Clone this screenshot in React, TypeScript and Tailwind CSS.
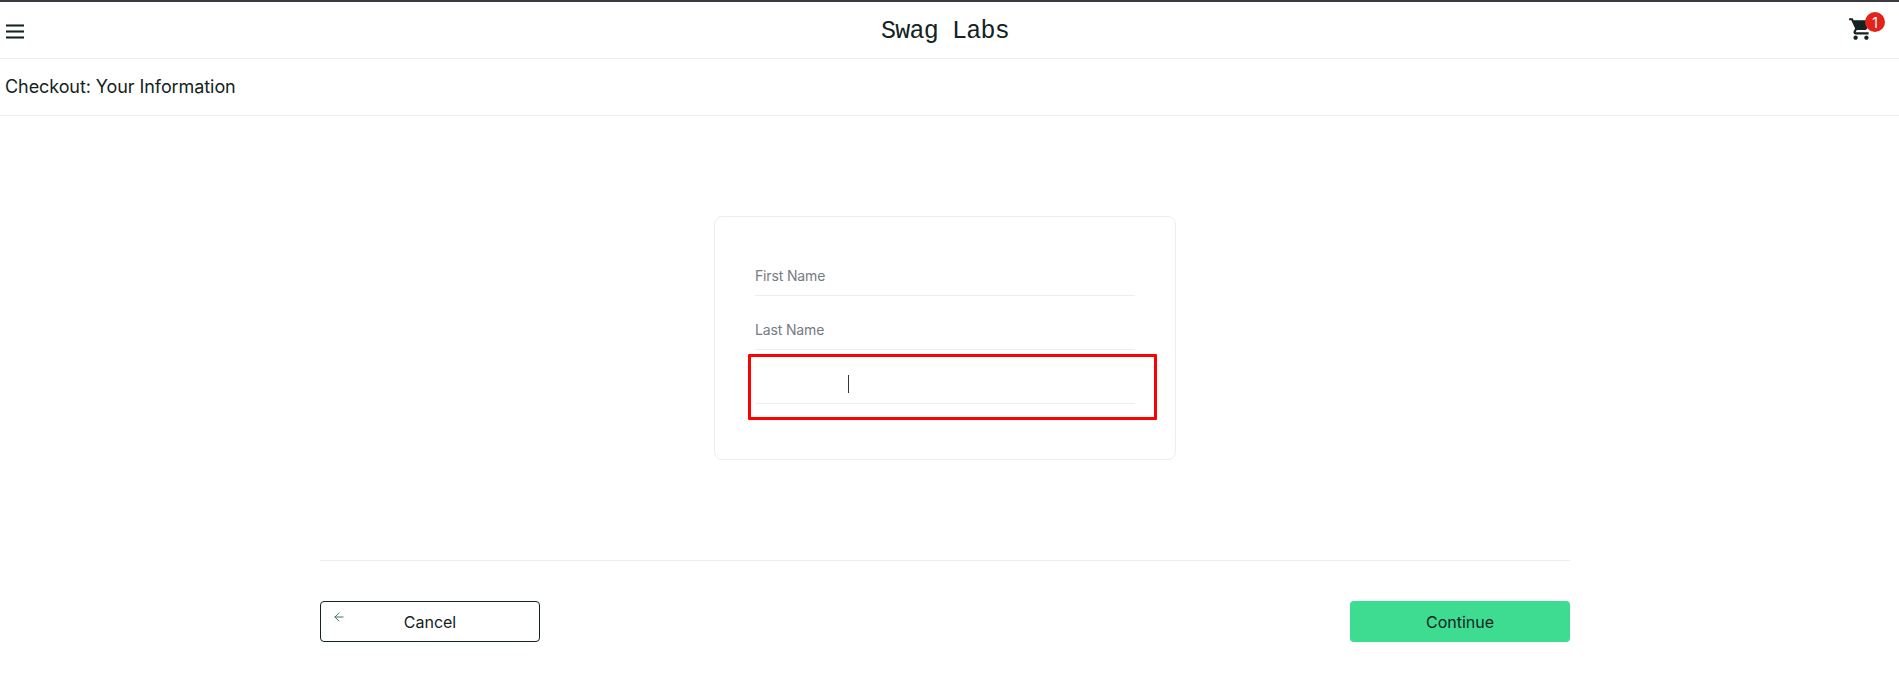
import { ArrowLeft } from "lucide-react";
import { MdShoppingCart } from "react-icons/md";

function Header() {
  return (
    <header className="grid h-[59px] grid-cols-[1fr_auto_1fr] border-t-2 border-b border-t-[#3d3a42] border-b-[#ededed] pr-[9px]">
      <button aria-label="Open Menu" className="ml-1.5 mt-[22px] flex h-[15px] w-[18px] flex-col justify-between">
        <span className="h-[3px] w-full border-y border-[#7f8887] bg-[#132322]" />
        <span className="h-[3px] w-full border-y border-[#7f8887] bg-[#132322]" />
        <span className="h-[3px] w-full border-y border-[#7f8887] bg-[#132322]" />
      </button>
      <div className="mt-[14px] font-['Liberation_Mono',monospace] text-[25px] leading-8 tracking-[-0.8px]">Swag Labs</div>
      <div className="relative mt-[14px] mr-[16px] h-[26px] w-[26px] justify-self-end">
        <MdShoppingCart size={26} />
        <span className="absolute top-[-4px] left-[17px] flex h-5 w-5 items-center justify-center rounded-full bg-[#e2231a] text-[14px] text-white">1</span>
      </div>
    </header>
  );
}

function Field({ label }: { label: string }) {
  return (
    <div className="h-[39px] border-b border-[#ededed] pt-[9px] text-[14px] leading-5 tracking-[-0.15px] text-[#757a85]">
      {label}
    </div>
  );
}

export default function App() {
  return (
    <div className="h-[695px] overflow-hidden bg-white font-['Inter',sans-serif] text-[#132322]">
      <Header />
      <div className="h-[57px] border-b border-[#ededed] pt-[14px] pl-[5px] text-[18px] leading-7 tracking-[-0.08px]">
        Checkout: Your Information
      </div>
      <main className="ml-[320px] w-[1250px] pt-[100px]">
        <form className="mx-auto flex h-[244px] w-[462px] flex-col gap-[15px] rounded-lg border border-[#ededed] px-10 pt-10">
          <Field label="First Name" />
          <Field label="Last Name" />
          <div className="relative h-[39px] border-b border-[#ededed]">
            <span className="absolute top-[10px] left-[93px] h-[18px] w-px bg-[#30353d]" />
            <span className="absolute -top-[11px] -left-[7px] h-[66px] w-[409px] rounded-[1px] border-3 border-[#ff0000]" />
          </div>
        </form>
        <footer className="mt-[100px] flex justify-between border-t border-[#ededed] pt-10 text-[16px]">
          <button className="relative h-[41px] w-[220px] rounded border border-[#132322]">
            <ArrowLeft size={14} strokeWidth={1.7} className="absolute top-[8px] left-[10.5px] text-[#3d735c]" />
            Cancel
          </button>
          <button className="h-[41px] w-[220px] rounded bg-[#3ddc91]">Continue</button>
        </footer>
      </main>
    </div>
  );
}
